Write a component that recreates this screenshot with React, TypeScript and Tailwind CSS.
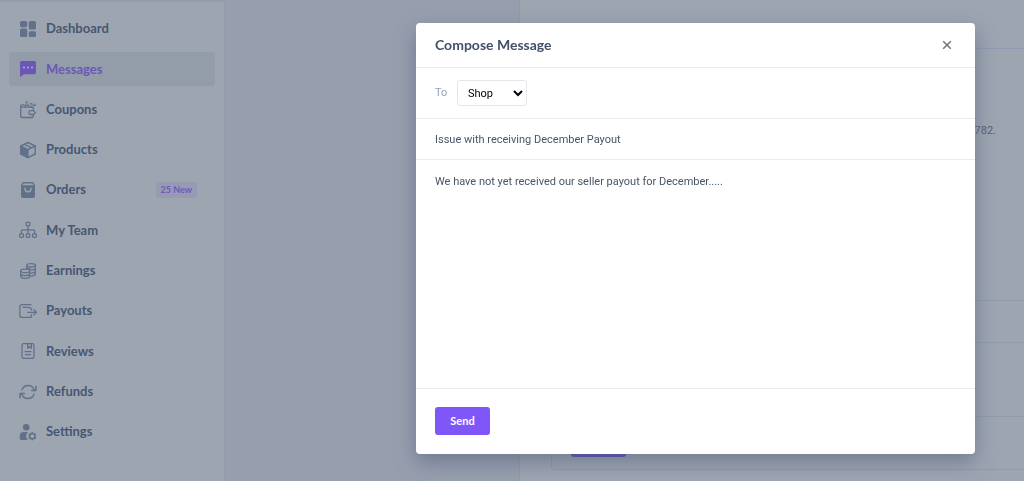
// App.tsx
// Seller dashboard with the compose message dialog open
import { useState, type ReactNode } from 'react';
import clsx from 'clsx';

type NavItem = {
  label: string;
  icon: ReactNode;
  active?: boolean;
  badge?: string;
};

function Icon({ children }: { children: ReactNode }) {
  return (
    <svg
      viewBox="0 0 16 16"
      className="size-4 shrink-0 overflow-visible"
      fill="none"
      stroke="currentColor"
      strokeWidth="1.3"
      strokeLinecap="round"
      strokeLinejoin="round"
      aria-hidden="true"
    >
      {children}
    </svg>
  );
}

const NAV: NavItem[] = [
  {
    label: 'Dashboard',
    icon: (
      <Icon>
        <g fill="currentColor" stroke="none">
          <rect x="0" y="0" width="7.2" height="6.2" rx="1.6" />
          <rect x="8.8" y="0" width="7.2" height="8.6" rx="1.6" />
          <rect x="0" y="7.6" width="7.2" height="8.4" rx="1.6" />
          <rect x="8.8" y="10.2" width="7.2" height="5.8" rx="1.6" />
        </g>
      </Icon>
    ),
  },
  {
    label: 'Messages',
    active: true,
    icon: (
      <Icon>
        <path
          fill="currentColor"
          stroke="none"
          d="M1.8 0h12.4A1.8 1.8 0 0 1 16 1.8v9.600a1.8 1.8 0 0 1-1.8 1.8H4L.7 15.8c-.3.3-.7.1-.7-.3V1.8A1.8 1.8 0 0 1 1.8 0Z"
        />
        <g fill="#a9a4d2" stroke="none">
          <circle cx="4" cy="6.5" r="1.1" />
          <circle cx="8" cy="6.5" r="1.1" />
          <circle cx="12" cy="6.5" r="1.1" />
        </g>
      </Icon>
    ),
  },
  {
    label: 'Coupons',
    icon: (
      <Icon>
        <path d="M13.4 8.4V6.7a1.5 1.5 0 0 0-1.5-1.5H2a1.2 1.2 0 0 1 0-2.4h2M.7 4v9.9a1.6 1.6 0 0 0 1.6 1.6h9.6a1.5 1.5 0 0 0 1.5-1.5v-1.2" />
        <path d="M10.8 8.7h2.8l1.9 1.9-1.9 1.9h-2.8a1.9 1.9 0 0 1 0-3.8Z" />
        <path d="M5.2 5V3.2h3.400V5M11.2 5l.8-1.4" />
        <circle cx="6.6" cy=".4" r="1" strokeWidth=".9" />
        <circle cx="14" cy="3" r="1.1" strokeWidth=".9" />
        <circle cx="10.6" cy="1.8" r=".7" strokeWidth=".8" />
      </Icon>
    ),
  },
  {
    label: 'Products',
    icon: (
      <Icon>
        <path d="M8 .5 15.2 4v8L8 15.6.8 12V4Z" strokeWidth="1.4" />
        <path d="M.8 4 8 7.6v8L.8 12Z" fill="currentColor" />
        <path d="M8 7.6 15.2 4M4.4 2.3l7.2 3.5" strokeWidth="1.4" />
      </Icon>
    ),
  },
  {
    label: 'Orders',
    badge: '25 New',
    icon: (
      <Icon>
        <path
          fill="currentColor"
          fillRule="evenodd"
          stroke="none"
          d="M3.6 0h8.8c.6 0 1.1.3 1.4.8l.9 1.7c.2.4.3.7.3 1.1v10.6a1.8 1.8 0 0 1-1.8 1.8H2.8A1.8 1.8 0 0 1 1 14.2V3.6c0-.4.1-.7.3-1.1l.9-1.7C2.5.3 3 0 3.6 0Zm-.2 1.4-.9 1.9h11l-.9-1.9Z"
        />
        <path d="M5 6.3v.5a3 3 0 0 0 6 0v-.5" stroke="#9da5b1" strokeWidth="1.4" />
      </Icon>
    ),
  },
  {
    label: 'My Team',
    icon: (
      <Icon>
        <rect x="6.2" y=".3" width="3.6" height="3.4" rx=".5" />
        <rect x="-.3" y="11.9" width="3.6" height="3.4" rx=".5" />
        <rect x="6.2" y="11.9" width="3.6" height="3.4" rx=".5" />
        <rect x="12.7" y="11.9" width="3.6" height="3.4" rx=".5" />
        <path d="M8 4v7.5M1.5 11.5V8.8c0-.6.4-1 1-1h11c.6 0 1 .4 1 1v2.7" />
      </Icon>
    ),
  },
  {
    label: 'Earnings',
    icon: (
      <Icon>
        <ellipse cx="11" cy="2.3" rx="4.3" ry="1.7" />
        <path d="M6.7 2.3v3.2M15.3 2.3v9c0 1-2 1.8-4.6 1.8M15.3 5.3c0 1-2 1.8-4.3 1.8M15.3 8.3c0 1-2 1.8-4.3 1.8M6.7 4.8c.6.5 1.8 1 3.3 1.2" />
        <ellipse cx="5.2" cy="7.9" rx="4.5" ry="1.7" />
        <path d="M.7 7.9v5.6c0 1 2 1.8 4.5 1.8s4.5-.8 4.5-1.8V7.9M.7 10.8c0 1 2 1.8 4.5 1.8s4.5-.8 4.5-1.8" />
      </Icon>
    ),
  },
  {
    label: 'Payouts',
    icon: (
      <Icon>
        <path d="M11 1.6H2A2.2 2.2 0 0 0-.2 3.8v8.4A2.2 2.2 0 0 0 2 14.4h7.5a2 2 0 0 0 2-2v-.8" />
        <path d="M3 4.3h5.5a3 3 0 0 1 3 2.7" />
        <path d="M7.8 9.3h8.5M13.8 6.7l2.6 2.6-2.6 2.6" />
      </Icon>
    ),
  },
  {
    label: 'Reviews',
    icon: (
      <Icon>
        <rect x="2" y=".6" width="12" height="14.8" rx="1.6" />
        <path d="M7.7.8v4.4l1.8-1.3 1.8 1.3V.8M5 8.6h6M5.5 11.7h5" />
      </Icon>
    ),
  },
  {
    label: 'Refunds',
    icon: (
      <Icon>
        <path d="M2 5.8A6.5 6.5 0 0 1 14.2 5.7M16 2.2v4.3h-4.3M14 10.2A6.5 6.5 0 0 1 1.8 10.3M0 13.8V9.5h4.3" strokeWidth="1.5" />
      </Icon>
    ),
  },
  {
    label: 'Settings',
    icon: (
      <Icon>
        <circle cx="6.2" cy="3.2" r="3.3" fill="currentColor" stroke="none" />
        <path
          fill="currentColor"
          stroke="none"
          d="M3.5 8H8a5.5 5.5 0 0 0-.2 8H1.5C.3 16-.3 15.4-.3 14.2v-2.4A3.8 3.8 0 0 1 3.5 8Z"
        />
        <circle cx="12.3" cy="12.2" r="2.7" strokeWidth="1.6" />
        <path d="M12.3 8.6v.5M12.3 15.3v.5M15.4 10.4l-.4.3M9.6 13.7l-.4.3M9.2 10.4l.4.3M15 13.7l.4.3" strokeWidth="1.5" />
      </Icon>
    ),
  },
];

function Sidebar() {
  return (
    <aside className="w-[225px] shrink-0 border-t-2 border-r border-t-[#959eac] border-r-[#929dab] bg-[#9da5b1]">
      <nav className="flex min-h-[447px] flex-col justify-between px-[9px] pt-[10px]">
        {NAV.map((item) => (
          <a
            key={item.label}
            href={`#${item.label.toLowerCase().replace(' ', '-')}`}
            aria-current={item.active ? 'page' : undefined}
            className={clsx(
              'flex h-[34px] items-center rounded pr-[18px] pl-[11px] text-[13px] font-bold',
              item.active ? 'bg-[#929da9] text-[#6b57b5]' : 'text-[#62718a]',
            )}
          >
            {item.icon}
            <span className={clsx('ml-[10px]', !item.active && 'text-[#475772]')}>{item.label}</span>
            {item.badge && (
              <span className="ml-auto rounded-xs bg-[#969bb2] px-[5px] text-[9px] leading-4 text-[#6e5abb]">
                {item.badge}
              </span>
            )}
          </a>
        ))}
      </nav>
    </aside>
  );
}

// Open thread, mostly covered by the dialog
function Thread() {
  return (
    <main className="flex min-w-0 flex-1 flex-col overflow-hidden bg-[#9da5b1]">
      <div className="h-[49px] border-b border-[#8f9bb0]" />
      <p className="mt-[74px] pr-[28px] text-right font-['Roboto','Liberation_Sans',sans-serif] text-[11px] leading-4 text-[#53627c]">
        782.
      </p>
      <div className="mt-[161px] ml-[31px] rounded-l-sm border border-r-0 border-[#8f9cab]">
        <div className="h-[42px] border-b border-[#8f9cab]" />
        <div className="h-[74px] border-b border-[#8f9cab]" />
        <div className="px-[19px] pt-[12px] pb-[12px]">
          <button type="button" aria-label="Reply" className="block h-7 w-[55px] rounded-[3px] bg-[#5f4fb1]" />
        </div>
      </div>
    </main>
  );
}

function ComposeDialog() {
  const [to, setTo] = useState('Shop');
  const [subject, setSubject] = useState('Issue with receiving December Payout');
  const [body, setBody] = useState('We have not yet received our seller payout for December.....');

  return (
    <div className="fixed inset-0 flex items-start justify-end pt-[23px] pr-[49px]">
      <form
        role="dialog"
        aria-labelledby="compose-title"
        onSubmit={(e) => e.preventDefault()}
        className="flex w-full max-w-[559px] flex-col divide-y divide-[#e8ebf2] rounded bg-white font-['Roboto','Liberation_Sans',sans-serif] text-[11px] text-[#475569] shadow-[0_8px_20px_rgba(71,85,115,0.5)]"
      >
        <header className="flex h-[45px] items-center justify-between pr-[22px] pl-[19px]">
          <h2 id="compose-title" className="font-['Lato','Liberation_Sans',sans-serif] text-sm font-bold text-[#435069]">
            Compose Message
          </h2>
          <button type="button" aria-label="Close" className="p-px text-[#777]">
            <svg viewBox="0 0 10 10" className="size-[10px]" stroke="currentColor" strokeWidth="1.6" aria-hidden="true">
              <path d="m1.200 1.200 7.600 7.600M8.800 1.200 1.200 8.800" />
            </svg>
          </button>
        </header>
        <div className="flex h-[51px] items-center px-[19px]">
          <label htmlFor="to" className="w-[22px] text-[#94a3b8]">To</label>
          <select
            id="to"
            value={to}
            onChange={(e) => setTo(e.target.value)}
            className="h-[26px] w-[70px] rounded-[3px] border border-[#e2e5ea] bg-white pl-[6px] text-[11px] text-black"
          >
            <option>Shop</option>
            <option>Admin</option>
          </select>
        </div>
        <input
          aria-label="Subject"
          value={subject}
          onChange={(e) => setSubject(e.target.value)}
          className="h-[41px] px-[19px] outline-none"
        />
        <textarea
          aria-label="Message"
          rows={13}
          value={body}
          onChange={(e) => setBody(e.target.value)}
          className="resize-none px-[19px] pt-[14px] pb-[6px] leading-4 outline-none"
        />
        <footer className="px-[19px] pt-[18px] pb-[19px]">
          <button
            type="submit"
            className="block h-7 w-[55px] rounded-[3px] bg-[#7f56f7] font-['Lato','Liberation_Sans',sans-serif] text-[11px] font-bold text-white"
          >
            Send
          </button>
        </footer>
      </form>
    </div>
  );
}

export default function App() {
  return (
    <div className="flex min-h-screen bg-[#979fae] font-['Lato','Liberation_Sans',sans-serif]">
      <Sidebar />
      <section className="w-[295px] shrink-0 border-r border-[#8f9bab] bg-[#979fae]" />
      <Thread />
      <ComposeDialog />
    </div>
  );
}
